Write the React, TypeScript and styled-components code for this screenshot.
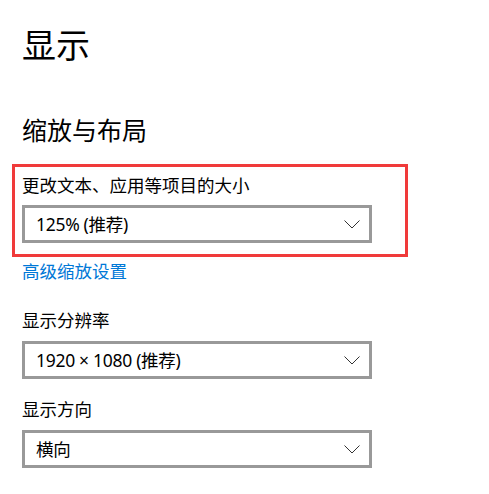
import React from "react";
import styled, { createGlobalStyle } from "styled-components";

const GlobalStyle = createGlobalStyle`
  html, body {
    margin: 0;
    padding: 0;
    background: #ffffff;
  }
  body {
    font-family: "Noto Sans", "Noto Sans CJK SC", sans-serif;
    color: #000000;
  }
`;

const Page = styled.div`
  display: flex;
  flex-direction: column;
  align-items: flex-start;
  padding: 24px 0 0 22px;
  width: 489px;
  height: 494px;
  box-sizing: border-box;
  background: #fff;
  overflow: hidden;
`;

const Title = styled.h1`
  margin: 0;
  font-size: 34px;
  line-height: 40px;
  font-weight: 400;
  font-family: "Noto Sans CJK SC", sans-serif;
`;

const SectionTitle = styled.h2`
  margin: 50px 0 0 0;
  font-size: 25px;
  line-height: 30px;
  font-weight: 400;
  font-family: "Noto Sans CJK SC", sans-serif;
`;

const Highlight = styled.div`
  display: flex;
  flex-direction: column;
  margin: 20px 0 0 -10px;
  padding: 6px 33px 11px 7px;
  border: 3px solid #f03a3a;
`;

const Label = styled.div<{ $top?: number }>`
  margin-top: ${(p) => p.$top ?? 0}px;
  font-size: 17.5px;
  line-height: 24px;
  font-family: "Noto Sans CJK SC", sans-serif;
`;

const Link = styled.a`
  margin-top: 2px;
  font-size: 17.5px;
  line-height: 24px;
  color: #0078d7;
  text-decoration: none;
  font-family: "Noto Sans CJK SC", sans-serif;
`;

const Select = styled.div<{ $top: number }>`
  margin-top: ${(p) => p.$top}px;
  display: flex;
  align-items: center;
  justify-content: space-between;
  width: 350px;
  height: 38px;
  box-sizing: border-box;
  border: 3px solid #999999;
  padding: 0 9px 0 11px;
  background: #fff;
`;

const SelectText = styled.span`
  font-size: 17.5px;
  line-height: 24px;
  letter-spacing: -0.3px;
  font-family: "Noto Sans", "Noto Sans CJK SC", sans-serif;
`;

const Chevron = () => (
  <svg width="16" height="9" viewBox="0 0 16 9" fill="none">
    <path d="M0.5 0.5 L8 8 L15.5 0.5" stroke="#333" strokeWidth="1" />
  </svg>
);

const Dropdown: React.FC<{ value: string; top: number }> = ({ value, top }) => (
  <Select $top={top}>
    <SelectText>{value}</SelectText>
    <Chevron />
  </Select>
);

export default function App() {
  return (
    <>
      <GlobalStyle />
      <Page>
        <Title>显示</Title>
        <SectionTitle>缩放与布局</SectionTitle>
        <Highlight>
          <Label>更改文本、应用等项目的大小</Label>
          <Dropdown value="125% (推荐)" top={8} />
        </Highlight>
        <Link href="#">高级缩放设置</Link>
        <Label $top={25}>显示分辨率</Label>
        <Dropdown value="1920 × 1080 (推荐)" top={9} />
        <Label $top={18}>显示方向</Label>
        <Dropdown value="横向" top={9} />
      </Page>
    </>
  );
}
